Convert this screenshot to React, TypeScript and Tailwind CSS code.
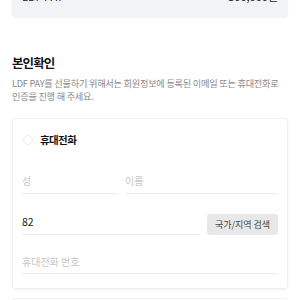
import React from "react";

export default function App() {
  return (
    <div
      className="w-[300px] h-[300px] overflow-hidden bg-white relative"
      style={{ fontFamily: '"Noto Sans CJK KR", "Noto Sans", sans-serif' }}
    >
      <div className="absolute left-0 right-0 top-[-24px] flex flex-col">
        <div className="mx-3 h-[41px] rounded bg-[#f2f3f5] shadow-[0_1px_2px_rgba(0,0,0,0.05)] flex items-center justify-between px-[10px]">
          <span className="text-[11px] text-[#222]">LDF PAY</span>
          <span className="text-[11px] text-[#222]">300,000원</span>
        </div>
        <div className="px-3 mt-[37px]">
          <div className="text-[12.5px] font-bold text-[#111] leading-[18px] tracking-[-0.9px]">본인확인</div>
          <div className="mt-[5px] text-[9.2px] text-[#888] leading-[12.5px] tracking-[-0.25px] whitespace-nowrap">
            LDF PAY를 선물하기 위해서는 회원정보에 등록된 이메일 또는 휴대전화로
            <br />
            인증을 진행 해 주세요.
          </div>
        </div>
        <div className="mx-3 mt-[16px] rounded-[3px] border border-[#f0f0f0] shadow-[0_1px_3px_rgba(0,0,0,0.05)] px-[9px] pt-[13px] pb-[14px]">
          <div className="flex items-center gap-[7px] pl-[1px] h-[16px]">
            <span className="w-[10px] h-[10px] rounded-full border border-[#ececec]"></span>
            <span className="text-[10.5px] font-bold text-[#111] tracking-[-0.6px] leading-[16px]">휴대전화</span>
          </div>
          <div className="mt-[26px] flex gap-[7px]">
            <div className="w-[96px] border-b border-[#ececec] pb-[5px] text-[10px] leading-[14px] text-[#c6c6c6]">성</div>
            <div className="flex-1 border-b border-[#ececec] pb-[5px] text-[10px] leading-[14px] text-[#c6c6c6]">이름</div>
          </div>
          <div className="mt-[20px] flex items-end gap-[7px]">
            <div className="flex-1 border-b border-[#ececec] pb-[5px] text-[10.5px] leading-[14px] text-[#222]">82</div>
            <button className="w-[71px] h-[21px] rounded-[3px] bg-[#e8e8e8] text-[9px] text-[#444] flex items-center justify-center">국가/지역 검색</button>
          </div>
          <div className="mt-[20px] border-b border-[#ececec] pb-[4px] text-[10px] leading-[14px] text-[#c6c6c6]">휴대전화 번호</div>
        </div>
        <div className="mx-3 mt-[9px] h-[60px] rounded-[3px] border border-[#f0f0f0] shadow-[0_1px_3px_rgba(0,0,0,0.05)]"></div>
      </div>
    </div>
  );
}
